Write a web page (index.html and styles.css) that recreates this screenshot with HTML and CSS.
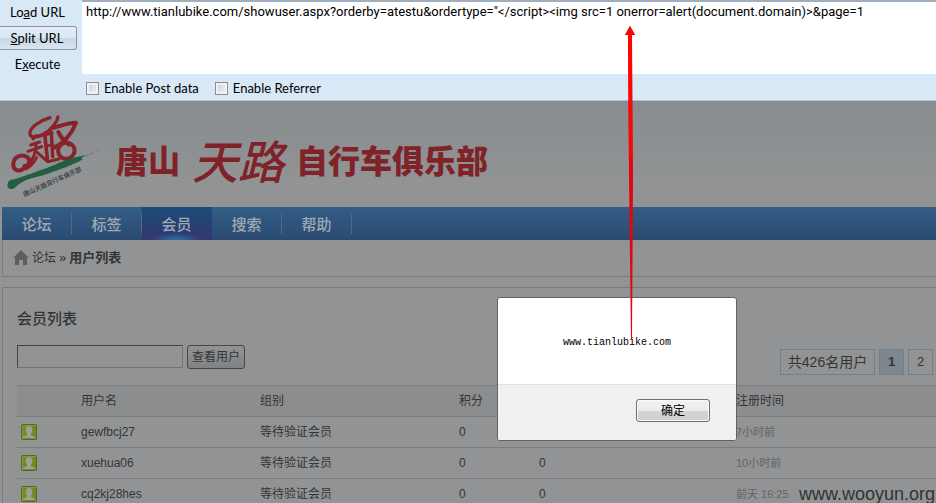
FILE: index.html
```html
<!DOCTYPE html>
<html lang="zh-CN">
<head>
<meta charset="utf-8">
<title>用户列表</title>
<link rel="stylesheet" href="styles.css">
</head>
<body>
<svg class="defs" aria-hidden="true">
  <symbol id="user" viewBox="0 0 16 16">
    <rect x="0.5" y="0.5" width="15" height="15" rx="1" fill="#708d25" stroke="#52691f"/>
    <path d="M1.500 14.500V1.500H14.500" fill="none" stroke="#829e36"/>
    <path d="M2 14V13L6 11V9.500C4.800 8.500 4.500 7 4.800 5C5 3 6 2 8 2S11 3 11.200 5C11.500 7 11.200 8.500 10 9.500V11L14 13V14Z" fill="#9aa294"/>
  </symbol>
</svg>
<form class="toolbar">
  <div class="actions">
    <button type="button">Lo<u>a</u>d URL</button>
    <button type="button" class="pressed"><u>S</u>plit URL</button>
    <button type="button">E<u>x</u>ecute</button>
  </div>
  <div class="request">
    <textarea aria-label="URL" spellcheck="false">http://www.tianlubike.com/showuser.aspx?orderby=atestu&amp;ordertype="&lt;/script&gt;&lt;img src=1 onerror=alert(document.domain)&gt;&amp;page=1</textarea>
    <div class="options">
      <label><input type="checkbox">Enable Post data</label>
      <label><input type="checkbox">Enable Referrer</label>
    </div>
  </div>
</form>
<div class="page">
  <header class="banner">
    <svg class="logo" viewBox="0 0 315 285" aria-hidden="true">
      <g fill="none" stroke="#88232b" stroke-linecap="round" stroke-linejoin="round">
        <path d="M150 29C119 38 86 60 90 79C94 93 125 87 146 68C162 53 171 43 174 27" stroke-width="10"/>
        <path d="M109 83L99 92" stroke-width="10"/>
        <path d="M134 76L142 151" stroke-width="11"/>
        <path d="M154 72L158 146" stroke-width="10"/>
        <path d="M134 82L157 75M139 115L159 109" stroke-width="8"/>
        <path d="M92 111L119 102M84 130L125 116M108 109C109 133 101 153 81 177M108 130L143 161L177 153" stroke-width="9"/>
        <path d="M157 60C181 54 204 44 228 44C216 77 190 105 160 121M175 72C183 88 194 101 207 110" stroke-width="12"/>
        <ellipse cx="199" cy="128" rx="25" ry="24" transform="rotate(-25 199 128)" stroke-width="12"/>
        <path d="M77 175C60 197 38 187 40 167C42 145 64 137 81 147C94 155 87 175 73 174" stroke-width="12"/>
        <path d="M78 183C93 175 103 163 110 148" stroke-width="8"/>
      </g>
      <path d="M23 227C27 213 38 216 53 211C101 194 142 181 181 163C209 151 235 146 258 141C245 149 238 152 250 153C219 171 188 181 152 194C110 209 70 211 47 237C35 249 18 242 23 227Z" fill="#205f40"/>
      <path d="M256 145L268 139M271 138L282 134M290 129L298 125" stroke="#687c73" stroke-width="3"/>
      <text class="motto" transform="translate(73 266) rotate(-24)">唐山天路自行车俱乐部</text>
    </svg>
    <h1><span>唐山</span><em>天路</em><span>自行车俱乐部</span></h1>
  </header>
  <nav class="menu">
    <a href="#">论坛</a><a href="#">标签</a><a href="#" class="active">会员</a><a href="#">搜索</a><a href="#">帮助</a>
  </nav>
  <div class="crumbs">
    <svg viewBox="0 0 16 15" aria-hidden="true"><path d="M8 0L16 8H14V15H10V10H6V15H2V8H0Z" fill="#5c5e60"/></svg>
    <a href="#">论坛</a><span>»</span><strong>用户列表</strong>
  </div>
  <main class="panel">
    <h2>会员列表</h2>
    <div class="tools">
      <form class="search"><input type="text" aria-label="用户名"><button type="button">查看用户</button></form>
      <div class="pager"><span>共426名用户</span><a href="#" class="current">1</a><a href="#">2</a></div>
    </div>
    <table>
      <thead><tr><th class="icon"></th><th class="name">用户名</th><th class="group">组别</th><th class="score">积分</th><th class="posts"></th><th>注册时间</th></tr></thead>
      <tbody>
        <tr><td><svg><use href="#user"/></svg></td><td>gewfbcj27</td><td>等待验证会员</td><td>0</td><td></td><td class="date">7小时前</td></tr>
        <tr><td><svg><use href="#user"/></svg></td><td>xuehua06</td><td>等待验证会员</td><td>0</td><td>0</td><td class="date">10小时前</td></tr>
        <tr><td><svg><use href="#user"/></svg></td><td>cq2kj28hes</td><td>等待验证会员</td><td>0</td><td>0</td><td class="date">前天 16:25</td></tr>
      </tbody>
    </table>
  </main>
</div>
<section class="dialog" role="dialog" aria-label="www.tianlubike.com">
  <p>www.tianlubike.com</p>
  <footer><button type="button">确定</button></footer>
</section>
<svg class="arrow" viewBox="0 0 12 314" aria-hidden="true"><path d="M5 0L10 9H7L8 150L7 314H6L4 150L3 9H0Z" fill="#e3060c"/><path d="M5 0L10 9H7V130H4L3 9H0Z" fill="#fb0505"/></svg>
<div class="watermark">www.wooyun.org</div>
</body>
</html>
```
FILE: styles.css
```css
* { box-sizing: border-box; }
body {
  position: relative;
  height: 100vh;
  margin: 0;
  overflow: hidden;
  display: flex;
  flex-direction: column;
  background: #909294;
  color: #333537;
  font: 12px/18px "Liberation Sans", "Noto Sans CJK SC", sans-serif;
}
a { color: inherit; text-decoration: none; }
button, input, textarea { font: inherit; color: inherit; }
.defs { position: absolute; width: 0; height: 0; }

.toolbar {
  display: flex;
  flex: none;
  gap: 5px;
  background: #d9e8f7;
  border-bottom: 1px solid #b4c3d4;
  color: #000;
  font: 13px/18px Lato, sans-serif;
}
.actions { width: 77px; flex: none; display: flex; flex-direction: column; gap: 2px; }
.actions button {
  height: 24px;
  padding: 0 2px 0 0;
  border: 1px solid transparent;
  background: none;
}
.actions .pressed {
  border-color: #8795a6;
  border-left: 0;
  border-radius: 0 3px 3px 0;
  background: linear-gradient(#e5eef7, #dae5f0 50%, #c7d6e5 50%, #d8e5f2);
}
.request { flex: 1; }
textarea {
  display: block;
  width: 100%;
  height: 74px;
  padding: 1px 4px;
  border: 0;
  border-top: 2px solid #a0afbf;
  outline: 0;
  resize: none;
  background: #fff;
  overflow: hidden;
  font-family: Roboto, sans-serif;
}
.options { display: flex; gap: 16px; padding: 5px 4px 3px; }
.options label { display: flex; align-items: center; gap: 5px; }
.options input {
  appearance: none;
  width: 13px;
  height: 13px;
  margin: 0;
  border: 1px solid #8b8e92;
  background: linear-gradient(135deg, #c9cdd2, #f4f5f6);
  box-shadow: inset 0 0 0 2px #f1f2f3;
}

.page {
  flex: 1 0 auto;
  padding-left: 2px;
  background:
    repeating-conic-gradient(#00000004 0 25%, #ffffff04 0 50%) 0 0 / 4px 4px,
    linear-gradient(#888c90, #919394 80px);
}
.banner { display: flex; height: 106px; align-items: flex-start; }
.logo { width: 105px; height: 95px; margin: 7px 0 0 -2px; flex: none; }
.motto { font: 500 19px "Noto Sans CJK SC", sans-serif; fill: #303437; }
h1 {
  display: flex;
  align-items: center;
  gap: 12px;
  margin: 28px 0 0 11px;
  color: #7f2329;
  font: 900 32px/60px "Noto Sans CJK SC", sans-serif;
  white-space: nowrap;
}
h1 em { font-size: 46px; font-weight: 500; line-height: 44px; }
.menu {
  display: flex;
  height: 33px;
  background: linear-gradient(#335e86, #2b4a70);
  color: #a0a9b3;
  font: 500 15px/33px "Noto Sans CJK SC", sans-serif;
}
.menu a { width: 70px; text-align: center; border-right: 1px solid transparent; border-image: linear-gradient(transparent 20%, #496b8d 20% 80%, transparent 80%) 1; }
.menu .active { background: radial-gradient(26px 7px at 50% 100%, #2875a0, transparent), linear-gradient(#194d78, #363671); border-image: none; }
.crumbs {
  display: flex;
  align-items: center;
  height: 37px;
  padding-left: 10px;
  border: 1px solid #797b7d;
  border-width: 0 0 1px 1px;
  font-size: 13px;
}
.crumbs svg { width: 16px; height: 15px; margin: 0 3px 2px 0; }
.crumbs a { font-size: 12px; }
.crumbs span { margin: 0 3px; }
.panel { margin-top: 10px; padding-left: 14px; border: 1px solid #797b7d; border-width: 1px 0 0 1px; }
h2 { margin: 18px 0 16px; font: 500 15px/24px "Noto Sans CJK SC", sans-serif; }
.tools { display: flex; justify-content: space-between; align-items: flex-start; height: 39px; }
.search { display: flex; gap: 4px; margin-top: -1px; }
.search input {
  width: 166px;
  height: 23px;
  border: 1px solid #727476;
  border-top-color: #424446;
  border-left-color: #424446;
  background: none;
}
.search button {
  width: 58px;
  height: 24px;
  padding: 0;
  border: 1px solid #454749;
  border-radius: 3px;
  background: linear-gradient(#919395, #888a8c 50%, #808284);
}
.pager { display: flex; gap: 4px; margin: 3px 3px 0 0; }
.pager > * {
  width: 25px;
  border: 1px solid #747f89;
  text-align: center;
  font-size: 13px;
  line-height: 24px;
}
.pager span { width: 95px; font-size: 14px; }
.pager .current { background: #7d878f; font-weight: 700; }
table { width: 100%; border-collapse: collapse; table-layout: fixed; text-align: left; }
tr { height: 31px; border-top: 1px solid #7b7d7f; }
th, td { padding: 0; font-weight: 400; }
thead tr { background: #0000000a; }
td svg { display: block; width: 16px; height: 16px; margin-left: 4px; }
.icon { width: 64px; }
.name { width: 179px; }
.group { width: 199px; }
.score { width: 80px; }
.posts { width: 197px; }
.date { color: #626466; font-size: 11px; }

.dialog {
  position: absolute;
  left: 497px;
  top: 297px;
  width: 240px;
  border: 1px solid #606264;
  border-radius: 3px;
  overflow: hidden;
  background: #fff;
  color: #000;
}
.dialog p { height: 86px; margin: 0; padding-top: 3px; text-align: center; font: 10px/84px "Liberation Mono", monospace; }
.dialog footer { display: flex; justify-content: flex-end; padding: 14px 26px 18px; border-top: 1px solid #dfdfdf; background: #f0f0f0; }
.dialog button {
  width: 74px;
  height: 23px;
  padding: 0;
  border: 1px solid #707070;
  border-radius: 3px;
  background: linear-gradient(#f2f2f2, #ebebeb 50%, #d5d5d5 50%, #cfcfcf);
  box-shadow: inset 0 0 0 1px #fafafa;
}
.arrow { position: absolute; left: 625px; top: 26px; width: 12px; height: 314px; }
.watermark { position: absolute; right: 1px; bottom: 0; color: #303234; font-size: 18px; line-height: 18px; }
```
